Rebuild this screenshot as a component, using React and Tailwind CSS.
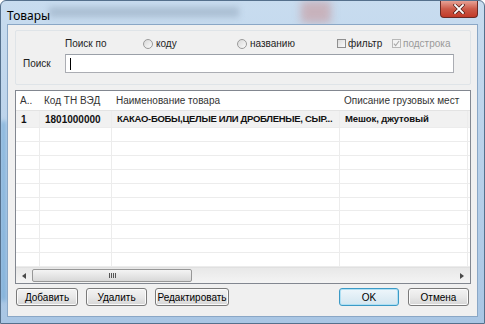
import React from "react";

const font = { fontFamily: '"Liberation Sans", Arial, sans-serif' };

function Radio({ label }) {
  return (
    <div className="flex items-center gap-[3px]">
      <span className="w-[10px] h-[10px] rounded-full border border-[#9a9a9a] bg-gradient-to-br from-[#d8d8d8] to-[#fbfbfb]" />
      <span>{label}</span>
    </div>
  );
}

function Check({ label, checked, disabled }) {
  return (
    <div className="flex items-center gap-[2px]">
      <span
        className={
          "w-[9px] h-[9px] border flex items-center justify-center " +
          (disabled ? "border-[#b8b8b8] bg-[#f4f4f4]" : "border-[#8f8f8f] bg-gradient-to-br from-[#dcdcdc] to-[#fafafa]")
        }
      >
        {checked && (
          <svg width="7" height="7" viewBox="0 0 8 8">
            <path d="M1 4.2 L3 6.4 L7 1.2" fill="none" stroke="#a8a8a8" strokeWidth="1.2" />
          </svg>
        )}
      </span>
      <span className={disabled ? "text-[#9a9a9a]" : ""}>{label}</span>
    </div>
  );
}

function Btn({ children, w, primary }) {
  return (
    <div
      className={
        "h-[18px] rounded-[3px] border flex items-center justify-center text-[10px] text-black " +
        (primary
          ? "border-[#3c9ac6] shadow-[inset_0_0_0_1px_#aee0f4] bg-gradient-to-b from-[#eef6fb] to-[#d3e6f0]"
          : "border-[#7a7a7a] shadow-[inset_0_0_0_1px_#fbfbfb] bg-gradient-to-b from-[#f3f3f3] via-[#e8e8e8] to-[#d6d6d6]")
      }
      style={{ width: w }}
    >
      {children}
    </div>
  );
}

const cols = [24, 72, 228, 128, 20];
const boldSize = [
  "text-[10px]",
  "text-[10px]",
  "text-[9.5px] tracking-[-0.3px]",
  "text-[9.5px] tracking-[-0.1px]",
  "text-[10px]",
];

function Row({ cells, bold, bg, h }) {
  return (
    <div className={"flex border-b border-[#ececec] " + bg} style={{ height: h }}>
      {cols.map((w, i) => (
        <div
          key={i}
          className={
            "shrink-0 flex items-center pl-[5px] overflow-hidden whitespace-nowrap " +
            (i < 4 ? "border-r border-[#ececec] " : "") +
            (bold ? "font-bold text-[#111] " + boldSize[i] : "")
          }
          style={{ width: w }}
        >
          {cells ? cells[i] : ""}
        </div>
      ))}
    </div>
  );
}

export default function App() {
  return (
    <div
      className="w-[485px] h-[324px] relative overflow-hidden flex flex-col rounded-t-[6px] border border-[#55708c] bg-gradient-to-b from-[#c8dcef] via-[#b9d1ea] to-[#a9c6e4] text-[10px] text-[#1e1e1e]"
      style={font}
    >
      {/* blurred background seen through glass */}
      <div className="absolute left-[48px] top-[6px] w-[190px] h-[10px] bg-[#8fa3b8] opacity-50 blur-[3px]" />
      <div className="absolute left-[300px] top-0 w-[30px] h-[22px] bg-[#c88a8a] opacity-50 blur-[4px]" />
      <div className="absolute left-0 top-[120px] w-[5px] h-[180px] bg-[#5f9fd0] opacity-60 blur-[2px]" />

      {/* title bar */}
      <div className="relative h-[23px] shrink-0 flex items-start pl-[6px] pr-[6px]">
        <span className="mt-[6px] text-[12px] text-black" style={{ fontFamily: '"Noto Sans", sans-serif' }}>Товары</span>
        <div className="ml-auto w-[38px] h-[17px] rounded-b-[4px] border border-[#6b2a24] border-t-0 bg-gradient-to-b from-[#e6a195] via-[#cc5a48] to-[#c23a28] flex items-center justify-center">
          <svg width="12" height="10" viewBox="0 0 12 10">
            <path d="M2 1 L10 9 M10 1 L2 9" stroke="#4a1c18" strokeWidth="3.2" strokeLinecap="square" />
            <path d="M2 1 L10 9 M10 1 L2 9" stroke="#ffffff" strokeWidth="1.8" strokeLinecap="square" />
          </svg>
        </div>
      </div>

      {/* client area */}
      <div className="relative mx-[6px] mb-[6px] flex-1 flex flex-col bg-[#f0f0f0] border border-[#8aa7c6]">
        {/* search panel */}
        <div className="mt-[5px] ml-[7px] mr-[6px] h-[55px] border border-[#dfe4e8] rounded-[2px] flex flex-col">
          <div className="flex items-center h-[23px] pt-[2px]">
            <span className="ml-[49px] w-[78px]">Поиск по</span>
            <div className="w-[94px]"><Radio label="коду" /></div>
            <div className="w-[100px]"><Radio label="названию" /></div>
            <div className="w-[55px]"><Check label="фильтр" /></div>
            <Check label="подстрока" checked disabled />
          </div>
          <div className="flex items-center">
            <span className="ml-[7px] w-[42px]">Поиск</span>
            <div className="w-[389px] h-[19px] border border-[#abadb3] border-t-[#9aa0a8] bg-white flex items-center pl-[4px]">
              <span className="w-px h-[12px] bg-black" />
            </div>
          </div>
        </div>

        {/* table */}
        <div className="mt-[5px] ml-[7px] mr-[6px] h-[194px] border border-[#828790] bg-white flex flex-col overflow-hidden">
          <div className="flex h-[20px] border-b border-[#e3e3e3] bg-white text-[#333] text-[10px]">
            {["А..", "Код ТН ВЭД", "Наименование товара", "Описание грузовых мест", ""].map((t, i) => (
              <div key={i} className="shrink-0 flex items-center pl-[4px] whitespace-nowrap overflow-hidden" style={{ width: cols[i] }}>
                {i === 4 ? <span className="w-[2px] h-[9px] bg-[#b8b8b8] -ml-[2px]" /> : t}
              </div>
            ))}
          </div>
          <Row cells={["1", "1801000000", "КАКАО-БОБЫ,ЦЕЛЫЕ ИЛИ ДРОБЛЕНЫЕ, СЫР...", "Мешок, джутовый", ""]} bold bg="bg-[#f1f1f1]" h={17} />
          <div className="flex-1 flex flex-col overflow-hidden">
            {Array.from({ length: 10 }).map((_, i) => (
              <Row key={i} h={14.2} bg="bg-white" />
            ))}
          </div>
          {/* scrollbar */}
          <div className="h-[16px] shrink-0 bg-gradient-to-b from-[#e8e8e8] to-[#f4f4f4] border-t border-[#e0e0e0] flex items-center">
            <div className="w-[16px] h-full flex items-center justify-center">
              <svg width="4" height="6" viewBox="0 0 4 6"><path d="M4 0 L0 3 L4 6 Z" fill="#4a4a4a" /></svg>
            </div>
            <div className="w-[160px] h-[13px] rounded-[2px] border border-[#979797] bg-gradient-to-b from-[#f4f4f4] to-[#d8d8d8] flex items-center justify-center gap-[1px]">
              <span className="w-px h-[5px] bg-[#555]" />
              <span className="w-px h-[5px] bg-[#555]" />
              <span className="w-px h-[5px] bg-[#555]" />
              <span className="w-px h-[5px] bg-[#555]" />
            </div>
            <div className="ml-auto w-[16px] h-full flex items-center justify-center">
              <svg width="4" height="6" viewBox="0 0 4 6"><path d="M0 0 L4 3 L0 6 Z" fill="#4a4a4a" /></svg>
            </div>
          </div>
        </div>

        {/* buttons */}
        <div className="mt-[4px] ml-[8px] flex items-center">
          <Btn w={62}>Добавить</Btn>
          <div className="ml-[8px]"><Btn w={61}>Удалить</Btn></div>
          <div className="ml-[8px]"><Btn w={74}>Редактировать</Btn></div>
          <div className="ml-auto"><Btn w={60} primary>OK</Btn></div>
          <div className="ml-[9px] mr-[8px]"><Btn w={61}>Отмена</Btn></div>
        </div>
      </div>
    </div>
  );
}
